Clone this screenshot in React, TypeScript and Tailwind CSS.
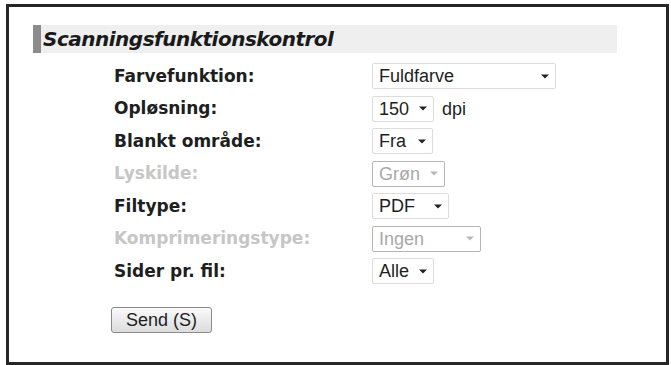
const rows = [
  { label: 'Farvefunktion:', value: 'Fuldfarve', w: 'w-[184px]' },
  { label: 'Opløsning:', value: '150', w: 'w-[62px]', suffix: 'dpi' },
  { label: 'Blankt område:', value: 'Fra', w: 'w-[61px]' },
  { label: 'Lyskilde:', value: 'Grøn', w: 'w-[73px]', disabled: true },
  { label: 'Filtype:', value: 'PDF', w: 'w-[77px]' },
  { label: 'Komprimeringstype:', value: 'Ingen', w: 'w-[109px]', disabled: true },
  { label: 'Sider pr. fil:', value: 'Alle', w: 'w-[62px]' },
];

function Arrow({ disabled }: { disabled?: boolean }) {
  return (
    <svg width="8" height="5" viewBox="0 0 8 5" className="shrink-0">
      <path d="M0 0.5 L8 0.5 L4 4.5 Z" fill={disabled ? '#b8b8b8' : '#222'} />
    </svg>
  );
}

export default function App() {
  return (
    <div className="w-[671px] h-[365px] bg-white pl-[6px] pt-[4px]">
      <div className="w-[663px] h-[361px] border-[3px] border-[#262626] bg-white pt-[18px] pl-[24px]">
        {/* Header */}
        <div className="w-[584px] h-[28px] bg-[#efefef] flex items-center">
          <div className="w-[8px] h-full bg-[#8c8c8c]" />
          <h1 className="ml-[2px] text-[20px] font-bold italic tracking-[-0.5px] text-[#1a1a1a] leading-none font-['DejaVu_Sans',sans-serif]">
            Scanningsfunktionskontrol
          </h1>
        </div>

        {/* Settings */}
        <div className="mt-[10px] flex flex-col gap-[6.5px]">
          {rows.map((r) => (
            <div key={r.label} className="flex items-center h-[26px]">
              <div
                className={`w-[339px] shrink-0 pl-[81px] text-[17px] font-bold leading-none whitespace-nowrap font-['DejaVu_Sans',sans-serif] ${
                  r.disabled ? 'text-[#c6c6c6]' : 'text-[#1e1e1e]'
                }`}
              >
                {r.label}
              </div>
              <div
                className={`${r.w} h-[26px] flex items-center justify-between pl-[6px] pr-[6px] rounded-[2px] border bg-white text-[18px] leading-none font-['Liberation_Sans',Arial,sans-serif] ${
                  r.disabled ? 'border-[#b5b5b5] text-[#a8a8a8]' : 'border-[#dcdcdc] text-[#1e1e1e]'
                }`}
              >
                <span>{r.value}</span>
                <Arrow disabled={r.disabled} />
              </div>
              {r.suffix && (
                <span className="ml-[8px] text-[18px] leading-none text-[#1e1e1e] font-['Liberation_Sans',Arial,sans-serif]">
                  {r.suffix}
                </span>
              )}
            </div>
          ))}
        </div>

        {/* Submit */}
        <button className="mt-[23px] ml-[78px] w-[101px] h-[26px] rounded-[3px] border border-[#8a8a8a] bg-gradient-to-b from-[#fafafa] to-[#dcdcdc] text-[18px] leading-none text-[#1e1e1e] font-['Liberation_Sans',Arial,sans-serif]">
          Send (S)
        </button>
      </div>
    </div>
  );
}
